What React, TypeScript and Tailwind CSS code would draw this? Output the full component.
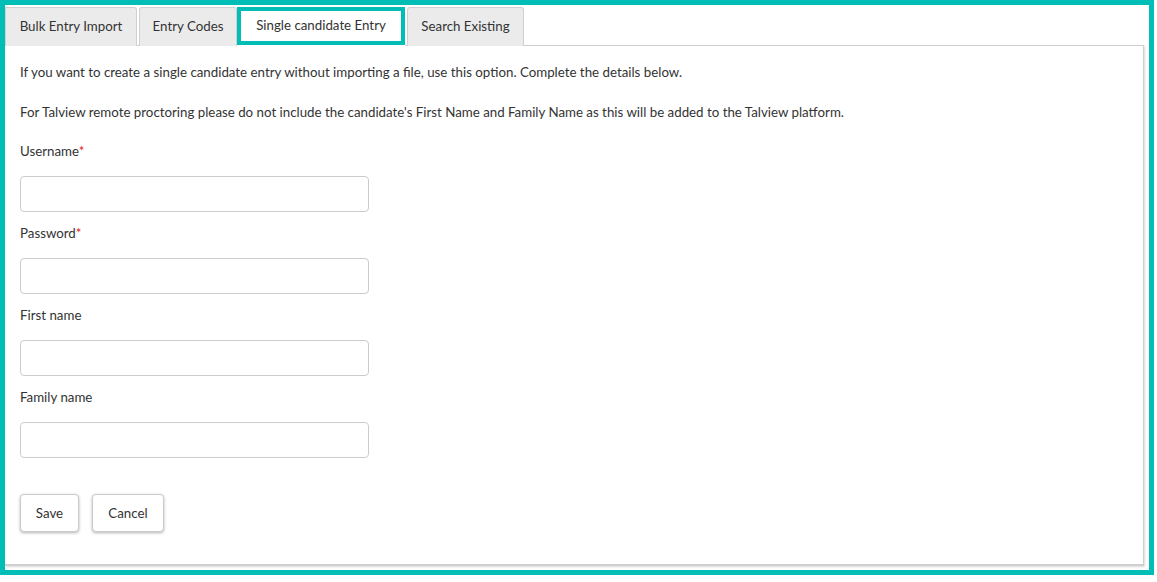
import React from 'react';

const font = { fontFamily: 'Lato, "Open Sans", sans-serif' };

const Field: React.FC<{ label: string; required?: boolean }> = ({ label, required }) => (
  <div className="flex flex-col">
    <label className="h-[18px] leading-[18px] text-[13.3px] text-[#333]">
      {label}
      {required && <span className="text-[#e02020]">*</span>}
    </label>
    <input
      type="text"
      className="mt-[16px] h-[36px] w-[349px] rounded-[4px] border border-[#ccc] bg-white outline-none"
    />
  </div>
);

export default function App() {
  return (
    <div className="h-[582px] w-[1157px] bg-white" style={font}>
      <div className="flex h-[575px] w-[1154px] flex-col border-[5px] border-[#00bdb5]">
        {/* tabs */}
        <div className="relative z-10 -mb-px flex h-[41px] items-end text-[13.3px] text-[#333]">
          <div className="flex h-[39px] w-[132px] items-center justify-center rounded-tr-[3px] border border-b-0 border-[#d0d0d0] bg-[#ebebeb]">
            Bulk Entry Import
          </div>
          <div className="ml-[2px] flex h-[39px] w-[98px] items-center justify-center rounded-t-[3px] border border-b-0 border-[#d0d0d0] bg-[#ebebeb]">
            Entry Codes
          </div>
          <div className="flex h-[39px] w-[168px] flex-col bg-white pb-px">
            <div className="flex flex-1 items-center justify-center border-[4px] border-[#00bdb5] bg-white">
              Single candidate Entry
            </div>
          </div>
          <div className="ml-[2px] flex h-[39px] w-[117px] items-center justify-center rounded-t-[3px] border border-b-0 border-[#d0d0d0] bg-[#ebebeb]">
            Search Existing
          </div>
        </div>

        {/* panel */}
        <div className="mb-[4px] mr-[5px] flex-1 border-t border-r border-b-2 border-[#cfcfcf] bg-white px-[15px] pt-[17px] text-[13.3px] text-[#333] shadow-[1px_1px_2px_rgba(0,0,0,0.15)]">
          <p className="h-[18px] leading-[18px]">
            If you want to create a single candidate entry without importing a file, use this option. Complete the details below.
          </p>
          <p className="mt-[22px] h-[18px] leading-[18px]">
            For Talview remote proctoring please do not include the candidate's First Name and Family Name as this will be added to the Talview platform.
          </p>
          <div className="mt-[21px] flex flex-col gap-[12px]">
            <Field label="Username" required />
            <Field label="Password" required />
            <Field label="First name" />
            <Field label="Family name" />
          </div>
          <div className="mt-[36px] flex gap-[13px]">
            <button className="h-[38px] w-[59px] rounded-[4px] border border-[#ccc] bg-white pt-[2px] text-[13.3px] text-[#333] shadow-[0_1px_3px_rgba(0,0,0,0.3)]">
              Save
            </button>
            <button className="h-[38px] w-[72px] rounded-[4px] border border-[#ccc] bg-white pt-[2px] text-[13.3px] text-[#333] shadow-[0_1px_3px_rgba(0,0,0,0.3)]">
              Cancel
            </button>
          </div>
        </div>
      </div>
    </div>
  );
}
